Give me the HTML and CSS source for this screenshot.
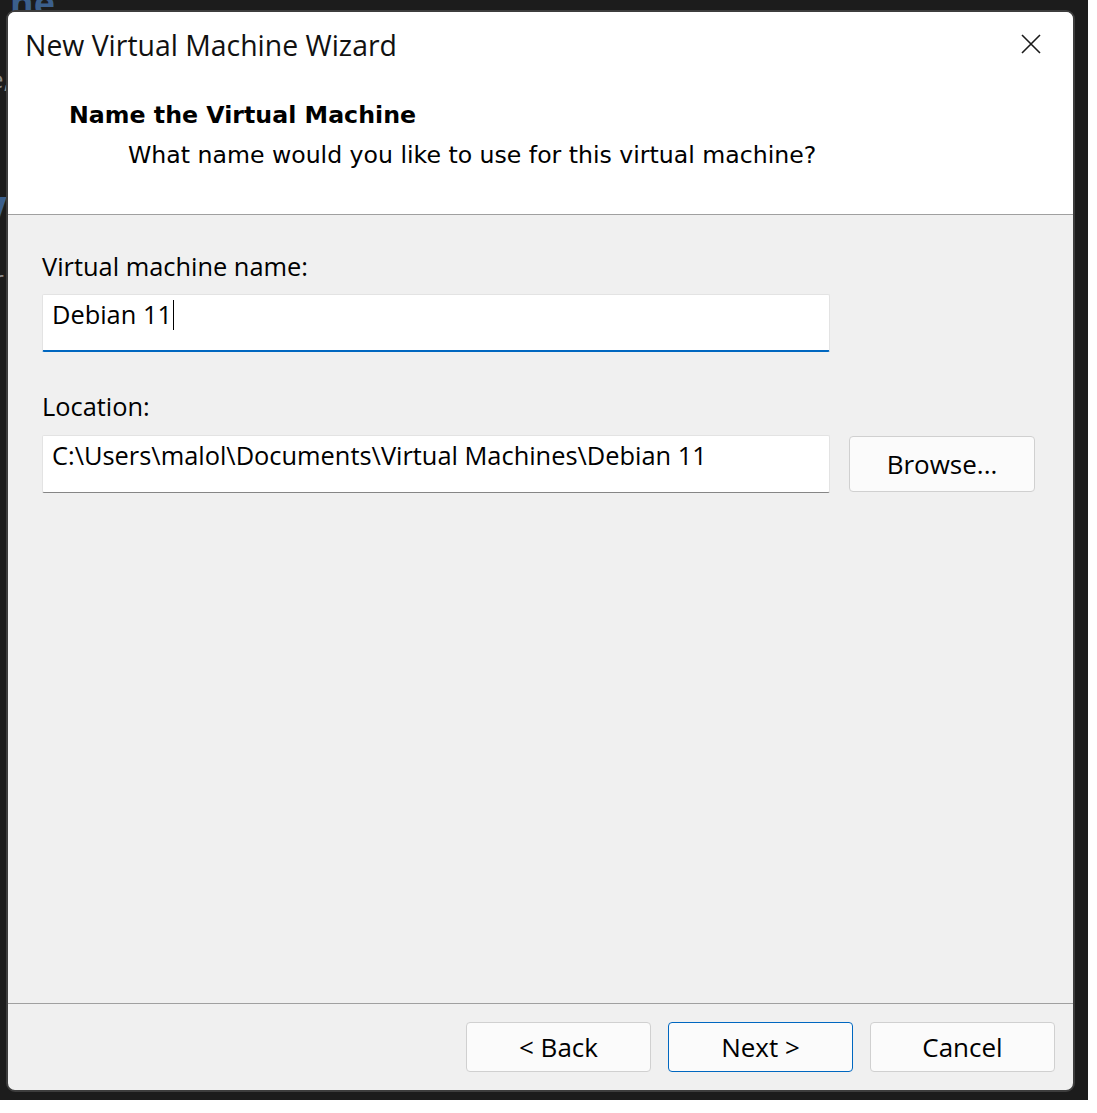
FILE: index.html
```html
<!DOCTYPE html>
<html>
<head>
<meta charset="utf-8">
<link rel="stylesheet" href="styles.css">
<title>New Virtual Machine Wizard</title>
</head>
<body>
<div class="desktop">
  <div class="bg-frag frag-ne">ne</div>
  <div class="bg-frag frag-e">e,</div>
  <div class="bg-frag frag-v">V</div>
  <div class="bg-frag frag-r">r</div>
  <div class="window">
    <div class="header">
      <div class="titlebar">
        <span class="title">New Virtual Machine Wizard</span>
        <svg class="close" width="20" height="20" viewBox="0 0 20 20"><path d="M1 1 L19 19 M19 1 L1 19" stroke="#1a1a1a" stroke-width="1.6" fill="none"/></svg>
      </div>
      <div class="heading">Name the Virtual Machine</div>
      <div class="subheading">What name would you like to use for this virtual machine?</div>
    </div>
    <div class="content">
      <div class="label label-name">Virtual machine name:</div>
      <div class="row">
        <div class="field focused">Debian 11<span class="caret"></span></div>
      </div>
      <div class="label label-loc">Location:</div>
      <div class="row">
        <div class="field">C:\Users\malol\Documents\Virtual Machines\Debian 11</div>
        <button class="btn browse">Browse...</button>
      </div>
    </div>
    <div class="footer">
      <button class="btn">&lt; Back</button>
      <button class="btn primary">Next &gt;</button>
      <button class="btn">Cancel</button>
    </div>
  </div>
</div>
</body>
</html>
```
FILE: styles.css
```css
html, body {
  margin: 0;
  padding: 0;
  background: #ffffff;
}
body {
  font-family: "Open Sans", "Noto Sans", sans-serif;
  color: #000;
}
.desktop {
  position: relative;
  width: 1088px;
  height: 1100px;
  background: #1c1c1c;
  overflow: hidden;
  padding-top: 10px;
  padding-left: 6px;
  box-sizing: border-box;
}
.bg-frag {
  position: absolute;
  font-family: "Open Sans", sans-serif;
  font-weight: 700;
}
.frag-ne { left: 10px; top: -22px; font-size: 36px; color: #3b5f8c; }
.frag-e { left: -10px; top: 62px; font-size: 24px; color: #8a8a8a; font-weight: 400; }
.frag-v { left: -22px; top: 182px; font-size: 44px; color: #3b5f8c; }
.frag-r { left: -6px; top: 262px; font-size: 24px; color: #8a8a8a; font-weight: 400; }
.window {
  position: relative;
  width: 1069px;
  height: 1082px;
  box-sizing: border-box;
  border: 2px solid #3d3d3d;
  border-radius: 9px;
  overflow: hidden;
  display: flex;
  flex-direction: column;
  background: #f0f0f0;
}
.header {
  background: #fff;
  height: 202px;
  border-bottom: 1px solid #a0a0a0;
  flex: none;
}
.titlebar {
  display: flex;
  justify-content: space-between;
  align-items: flex-start;
  padding: 0 32px 0 17px;
  height: 72px;
}
.title {
  font-size: 28.4px;
  line-height: 30px;
  margin-top: 18px;
  color: #111;
}
.close {
  margin-top: 22px;
}
.heading {
  font-family: "DejaVu Sans", sans-serif;
  font-weight: 700;
  font-size: 23.7px;
  line-height: 30px;
  padding-left: 61px;
  margin-top: 16px;
}
.subheading {
  font-family: "DejaVu Sans", sans-serif;
  font-size: 23.6px;
  line-height: 30px;
  padding-left: 120px;
  margin-top: 10px;
}
.content {
  flex: 1;
  padding: 34px 34px 0 34px;
}
.label {
  font-size: 25.4px;
  line-height: 34px;
  height: 40px;
}
.label-name {
  height: 45px;
}
.label-loc {
  margin-top: 37px;
  height: 46px;
}
.row {
  display: flex;
  align-items: flex-start;
  gap: 19px;
}
.field {
  width: 788px;
  height: 58px;
  box-sizing: border-box;
  background: #fff;
  border: 1px solid #e3e3e3;
  border-bottom: 1px solid #868686;
  border-radius: 2px;
  padding: 2px 9px 0 9px;
  font-size: 25.4px;
  line-height: 34px;
  white-space: nowrap;
}
.field.focused {
  border-bottom: 2px solid #0067c0;
}
.caret {
  display: inline-block;
  width: 1px;
  height: 30px;
  background: #000;
  vertical-align: -6px;
  margin-left: 1px;
}
.btn {
  font-family: "Open Sans", "Noto Sans", sans-serif;
  font-size: 26px;
  color: #000;
  background: #fbfbfb;
  border: 1px solid #d0d0d0;
  border-radius: 4px;
  width: 185px;
  height: 50px;
  padding: 0;
  line-height: 1;
}
.browse {
  height: 56px;
  width: 186px;
  margin-top: 1px;
}
.btn.primary {
  border-color: #0067c0;
}
.footer {
  flex: none;
  height: 87px;
  box-sizing: border-box;
  border-top: 1px solid #a0a0a0;
  display: flex;
  justify-content: flex-end;
  gap: 17px;
  padding: 18px 18px 0 0;
}
```
